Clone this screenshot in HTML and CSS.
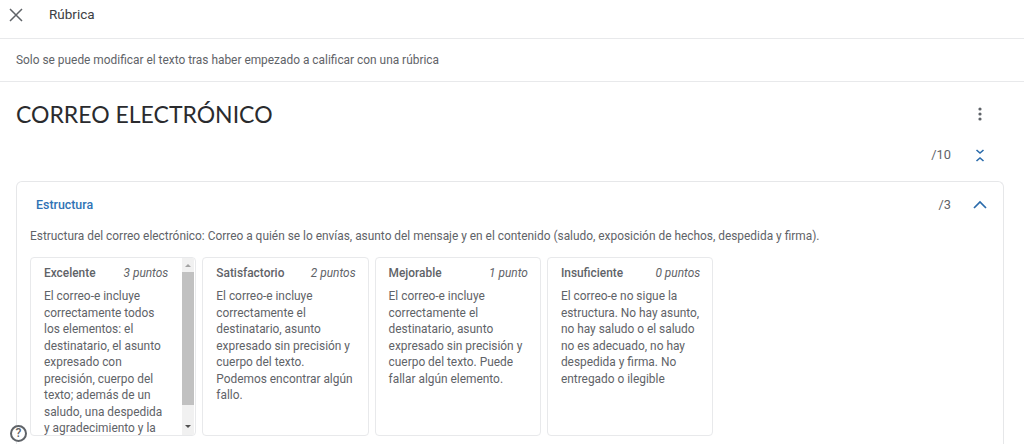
FILE: index.html
```html
<!DOCTYPE html>
<html lang="es">
<head>
  <meta charset="UTF-8">
  <meta name="viewport" content="width=device-width, initial-scale=1.0">
  <title>Rúbrica</title>
  <link rel="stylesheet" href="styles.css">
</head>
<body>
  <header class="topbar">
    <svg class="close-icon" viewBox="0 0 14 14" width="14" height="14"><path d="M1 1l12 12M13 1L1 13"/></svg>
    <span class="topbar-title">Rúbrica</span>
  </header>
  <div class="notice">Solo se puede modificar el texto tras haber empezado a calificar con una rúbrica</div>

  <main class="content">
    <div class="title-row">
      <h1>CORREO ELECTRÓNICO</h1>
      <svg class="more-icon" viewBox="0 0 4 14" width="4" height="14"><circle cx="2" cy="2" r="1.6"/><circle cx="2" cy="7" r="1.6"/><circle cx="2" cy="12" r="1.6"/></svg>
    </div>
    <div class="total-row">
      <span class="score">/10</span>
      <svg class="chevrons" viewBox="0 0 10 13" width="10" height="13"><path d="M1.500 1l3.500 3 3.500-3M1.500 12l3.500-3 3.500 3"/></svg>
    </div>

    <section class="criterion">
      <div class="criterion-head">
        <span class="criterion-name">Estructura</span>
        <span class="score">/3</span>
        <svg class="chevron-up" viewBox="0 0 14 9" width="14" height="9"><path d="M1 8l6-6 6 6"/></svg>
      </div>
      <p class="criterion-desc">Estructura del correo electrónico: Correo a quién se lo envías, asunto del mensaje y en el contenido (saludo, exposición de hechos, despedida y firma).</p>
      <div class="levels">
        <div class="level level-scroll">
          <div class="level-body">
            <div class="level-head"><strong>Excelente</strong><em>3 puntos</em></div>
            <p>El correo-e incluye correctamente todos los elementos: el destinatario, el asunto expresado con precisión, cuerpo del texto; además de un saludo, una despedida y agradecimiento y la</p>
          </div>
          <div class="scrollbar">
            <span class="arrow arrow-up"></span>
            <span class="thumb"></span>
            <span class="arrow arrow-down"></span>
          </div>
        </div>
        <div class="level">
          <div class="level-body">
            <div class="level-head"><strong>Satisfactorio</strong><em>2 puntos</em></div>
            <p>El correo-e incluye correctamente el destinatario, asunto expresado sin precisión y cuerpo del texto. Podemos encontrar algún fallo.</p>
          </div>
        </div>
        <div class="level">
          <div class="level-body">
            <div class="level-head"><strong>Mejorable</strong><em>1 punto</em></div>
            <p>El correo-e incluye correctamente el destinatario, asunto expresado sin precisión y cuerpo del texto. Puede fallar algún elemento.</p>
          </div>
        </div>
        <div class="level">
          <div class="level-body">
            <div class="level-head"><strong>Insuficiente</strong><em>0 puntos</em></div>
            <p>El correo-e no sigue la estructura. No hay asunto, no hay saludo o el saludo no es adecuado, no hay despedida y firma. No entregado o ilegible</p>
          </div>
        </div>
      </div>
    </section>
  </main>

  <div class="help">?</div>
</body>
</html>
```

FILE: styles.css
```css
/* General */
body {
  margin: 0;
  background-color: #fff;
  color: #5f6368;
  font-family: 'Roboto', sans-serif;
  font-size: 11.9px;
  height: 100vh;
  overflow: hidden;
}

/* Top bar */
.topbar {
  display: flex;
  align-items: center;
  height: 30px;
  padding: 0 0 8px 9px;
  border-bottom: 1px solid #e8e9eb;
}

.close-icon {
  fill: none;
  stroke: #5f6368;
  stroke-width: 1.5;
}

.topbar-title {
  margin: 0 0 2px 26px;
  font-size: 13.5px;
  color: #3c4043;
}

.notice {
  display: flex;
  align-items: center;
  height: 42px;
  padding-left: 16px;
  border-bottom: 1px solid #e8e9eb;
}

/* Main content */
.content {
  padding: 0 20px 0 16px;
}

.title-row {
  display: flex;
  justify-content: space-between;
  align-items: center;
  height: 64px;
  padding-right: 2px;
}

h1 {
  margin: 0;
  font-family: 'Lato', sans-serif;
  font-size: 23px;
  font-weight: 400;
  color: #2a2b2e;
}

.more-icon {
  margin-right: 20px;
  fill: #5f6368;
}

.total-row {
  display: flex;
  justify-content: flex-end;
  align-items: center;
  height: 16px;
  padding-right: 19px;
}

.score {
  font-size: 12.8px;
}

.chevrons {
  margin: 2px 0 0 24px;
  fill: none;
  stroke: #2a6bab;
  stroke-width: 1.6;
}

/* Criterion card */
.criterion {
  height: 262px;
  margin-top: 19px;
  padding: 0 14px 0 13px;
  border: 1px solid #e6e7e9;
  border-bottom: none;
  border-radius: 6px 6px 0 0;
}

.criterion-head {
  display: flex;
  align-items: center;
  height: 44px;
  padding: 0 2px 0 6px;
}

.criterion-name {
  margin-right: auto;
  font-size: 12.4px;
  font-weight: 500;
  color: #2f73b5;
}

.chevron-up {
  margin-left: 22px;
  fill: none;
  stroke: #2a6bab;
  stroke-width: 1.7;
}

.criterion-desc {
  margin: 0;
  line-height: 20px;
}

/* Level cards */
.levels {
  display: flex;
  gap: 6px;
  margin-top: 11px;
}

.level {
  display: flex;
  flex: none;
  width: 164.3px;
  height: 177px;
  border: 1px solid #e8e9eb;
  border-radius: 4px;
  overflow: hidden;
}

.level-body {
  flex: 1;
  min-width: 0;
  padding: 7px 12px 0 13px;
}

.level-scroll .level-body {
  padding-right: 14px;
}

.level-head {
  display: flex;
  justify-content: space-between;
  align-items: center;
  height: 16px;
  margin-bottom: 7px;
}

.level-head strong {
  font-weight: 500;
}

.level-head em {
  font-style: italic;
}

.level p {
  margin: 0;
  line-height: 16.5px;
}

.scrollbar {
  display: flex;
  flex: none;
  flex-direction: column;
  align-items: center;
  width: 12px;
  margin-right: 1px;
  background-color: #f1f1f1;
}

.thumb {
  width: 100%;
  height: 133px;
  background-color: #c1c1c1;
}

.arrow {
  width: 0;
  height: 0;
  border-left: 3px solid transparent;
  border-right: 3px solid transparent;
}

.arrow-up {
  margin: 6px 0 5px;
  border-bottom: 3px solid #a3a3a3;
}

.arrow-down {
  margin-top: 20px;
  border-top: 3px solid #505050;
}

/* Help button */
.help {
  position: absolute;
  left: 10px;
  top: 425px;
  width: 13px;
  height: 13px;
  border: 2px solid #5f6368;
  border-radius: 50%;
  background-color: #fff;
  font-size: 12px;
  font-weight: 500;
  line-height: 13px;
  text-align: center;
}
```
